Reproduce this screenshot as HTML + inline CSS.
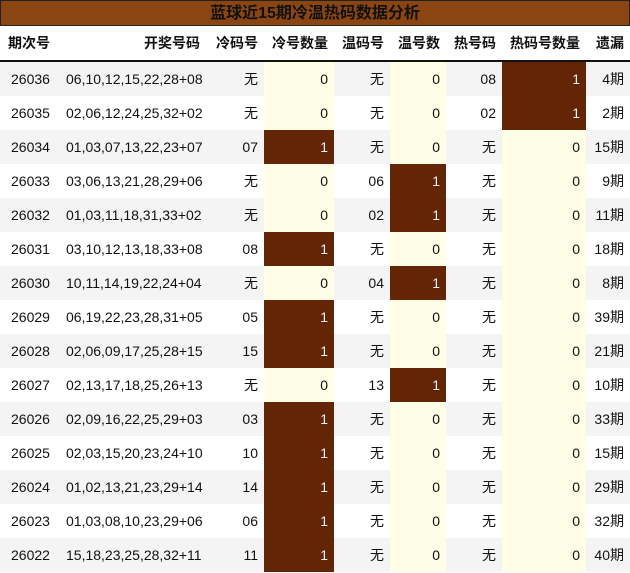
<!DOCTYPE html>
<html><head><meta charset="utf-8"><style>
body{margin:0;width:630px;height:573px;overflow:hidden;background:#fff;font-family:"Liberation Sans","Noto Sans CJK SC",sans-serif;}
.title{position:absolute;left:0;top:0;width:628px;height:24px;background:#8B4513;border:1px solid #222;text-align:center;font-weight:bold;font-size:16px;line-height:26px;color:#111;}
table{position:absolute;left:0;top:26px;border-collapse:collapse;table-layout:fixed;width:630px;font-size:14px;color:#111;}
th{height:34px;font-weight:bold;text-align:right;padding:0 6px;border-bottom:2px solid #111;white-space:nowrap}
td{height:34px;padding:0 6px;text-align:right;white-space:nowrap}
tr.g td{background:#f4f4f4}
td.y{background:#fefee6!important}
td.h{background:#642506!important;color:#eee}
th:first-child,td:first-child{text-align:left;padding-left:11px}
</style></head><body>
<div class="title">蓝球近15期冷温热码数据分析</div>
<table>
<colgroup><col style="width:60px"><col style="width:146px"><col style="width:58px"><col style="width:70px"><col style="width:56px"><col style="width:56px"><col style="width:56px"><col style="width:84px"><col style="width:44px"></colgroup>
<tr><th style="padding-left:8px">期次号</th><th>开奖号码</th><th>冷码号</th><th>冷号数量</th><th>温码号</th><th>温号数</th><th>热号码</th><th>热码号数量</th><th>遗漏</th></tr>
<tr class="g"><td>26036</td><td>06,10,12,15,22,28+08</td><td>无</td><td class="y">0</td><td>无</td><td class="y">0</td><td>08</td><td class="h">1</td><td>4期</td></tr>
<tr><td>26035</td><td>02,06,12,24,25,32+02</td><td>无</td><td class="y">0</td><td>无</td><td class="y">0</td><td>02</td><td class="h">1</td><td>2期</td></tr>
<tr class="g"><td>26034</td><td>01,03,07,13,22,23+07</td><td>07</td><td class="h">1</td><td>无</td><td class="y">0</td><td>无</td><td class="y">0</td><td>15期</td></tr>
<tr><td>26033</td><td>03,06,13,21,28,29+06</td><td>无</td><td class="y">0</td><td>06</td><td class="h">1</td><td>无</td><td class="y">0</td><td>9期</td></tr>
<tr class="g"><td>26032</td><td>01,03,11,18,31,33+02</td><td>无</td><td class="y">0</td><td>02</td><td class="h">1</td><td>无</td><td class="y">0</td><td>11期</td></tr>
<tr><td>26031</td><td>03,10,12,13,18,33+08</td><td>08</td><td class="h">1</td><td>无</td><td class="y">0</td><td>无</td><td class="y">0</td><td>18期</td></tr>
<tr class="g"><td>26030</td><td>10,11,14,19,22,24+04</td><td>无</td><td class="y">0</td><td>04</td><td class="h">1</td><td>无</td><td class="y">0</td><td>8期</td></tr>
<tr><td>26029</td><td>06,19,22,23,28,31+05</td><td>05</td><td class="h">1</td><td>无</td><td class="y">0</td><td>无</td><td class="y">0</td><td>39期</td></tr>
<tr class="g"><td>26028</td><td>02,06,09,17,25,28+15</td><td>15</td><td class="h">1</td><td>无</td><td class="y">0</td><td>无</td><td class="y">0</td><td>21期</td></tr>
<tr><td>26027</td><td>02,13,17,18,25,26+13</td><td>无</td><td class="y">0</td><td>13</td><td class="h">1</td><td>无</td><td class="y">0</td><td>10期</td></tr>
<tr class="g"><td>26026</td><td>02,09,16,22,25,29+03</td><td>03</td><td class="h">1</td><td>无</td><td class="y">0</td><td>无</td><td class="y">0</td><td>33期</td></tr>
<tr><td>26025</td><td>02,03,15,20,23,24+10</td><td>10</td><td class="h">1</td><td>无</td><td class="y">0</td><td>无</td><td class="y">0</td><td>15期</td></tr>
<tr class="g"><td>26024</td><td>01,02,13,21,23,29+14</td><td>14</td><td class="h">1</td><td>无</td><td class="y">0</td><td>无</td><td class="y">0</td><td>29期</td></tr>
<tr><td>26023</td><td>01,03,08,10,23,29+06</td><td>06</td><td class="h">1</td><td>无</td><td class="y">0</td><td>无</td><td class="y">0</td><td>32期</td></tr>
<tr class="g"><td>26022</td><td>15,18,23,25,28,32+11</td><td>11</td><td class="h">1</td><td>无</td><td class="y">0</td><td>无</td><td class="y">0</td><td>40期</td></tr>
</table>
</body></html>
